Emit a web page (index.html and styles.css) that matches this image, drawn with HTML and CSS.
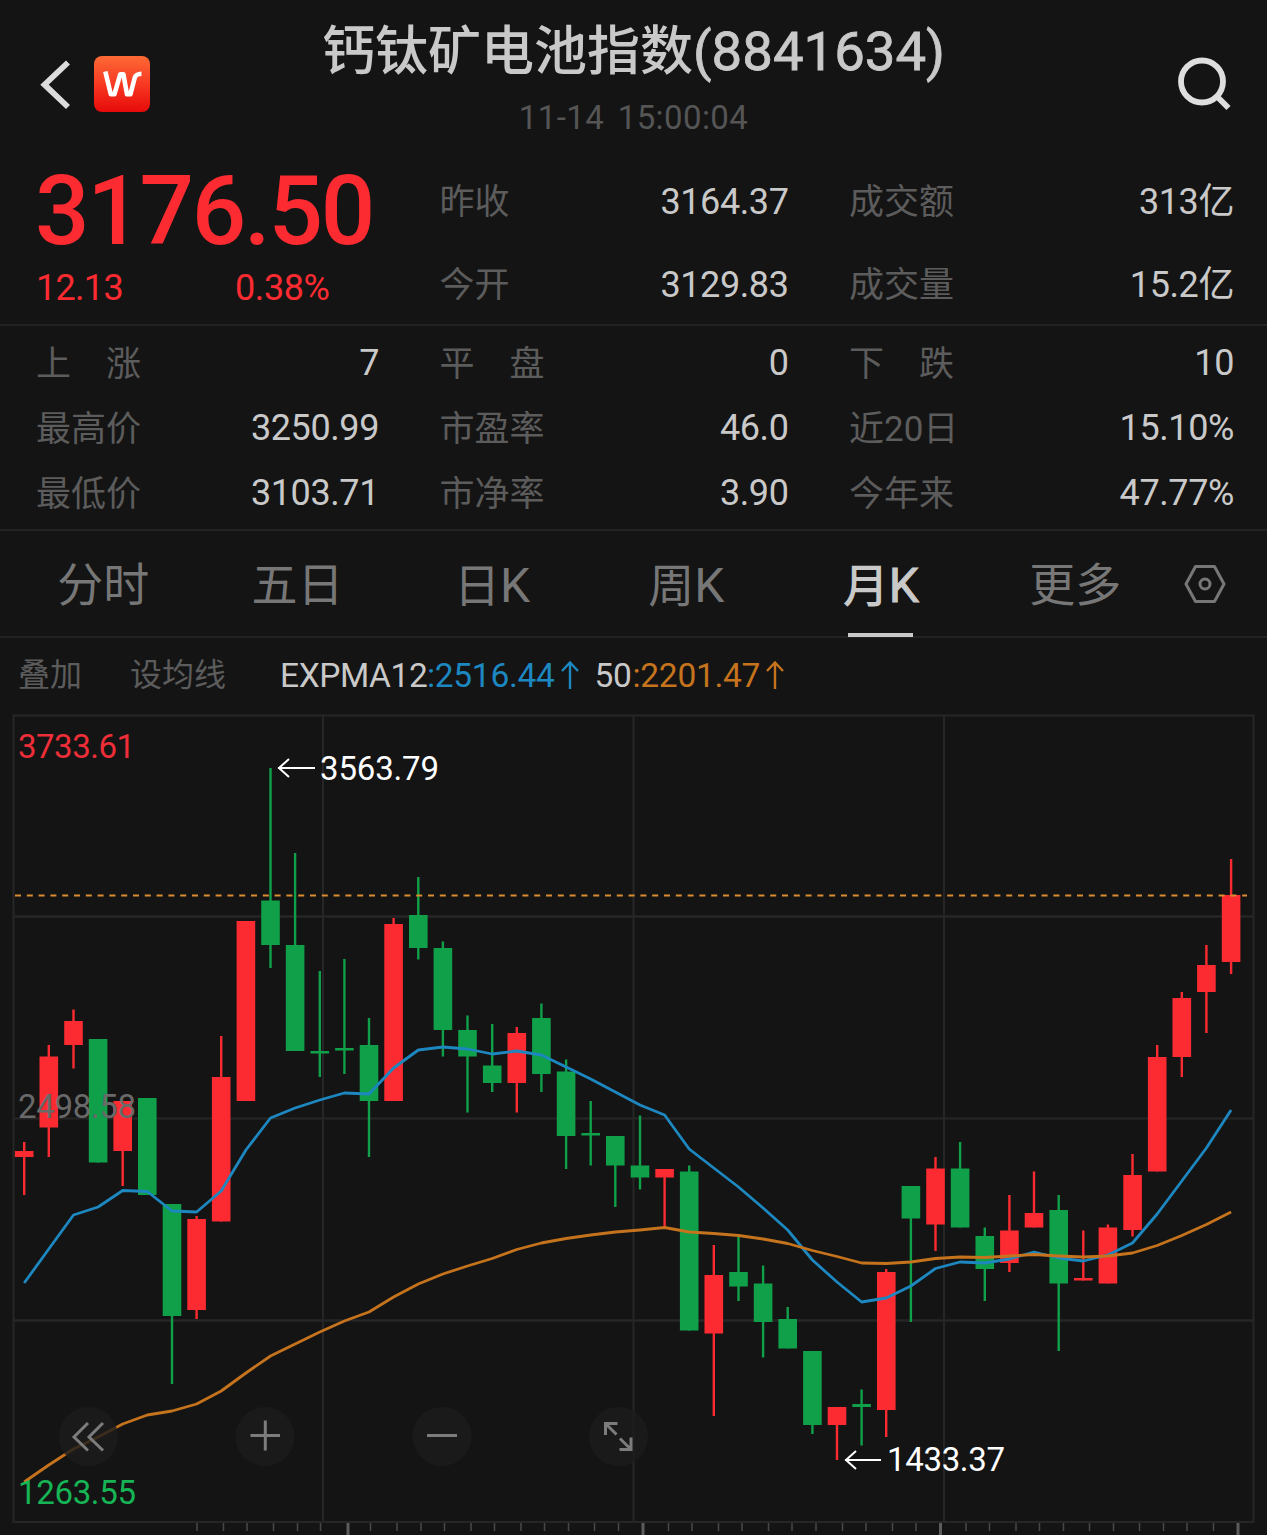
FILE: index.html
```html
<!DOCTYPE html>
<html lang="zh-CN">
<head>
<meta charset="utf-8">
<title>钙钛矿电池指数(8841634)</title>
<link rel="stylesheet" href="styles.css">
</head>
<body>
<header class="header">
  <div class="nav">
    <svg class="back" width="32" height="52" viewBox="0 0 32 52"><path d="M29 4.5 5.5 26.7 29 49" fill="none" stroke="#dcdcdc" stroke-width="5.8"/></svg>
    <svg class="logo" width="56" height="56" viewBox="0 0 56 56">
      <defs><linearGradient id="logo-fill" x1="0" y1="0" x2="0" y2="1"><stop offset="0" stop-color="#fd6a35"/><stop offset=".55" stop-color="#f63420"/><stop offset="1" stop-color="#e60a0a"/></linearGradient></defs>
      <rect width="56" height="56" rx="8" fill="url(#logo-fill)"/>
      <path d="M11.3 15.5 16.8 38.3H20.4L26.3 18.2H29.4L33 38.3H36.4L40.8 21.5Q42 17.8 47.5 17.7" fill="none" stroke="#fff" stroke-width="4.6" stroke-linejoin="round"/>
    </svg>
  </div>
  <div class="heading">
    <h1 class="title">钙钛矿电池指数<span class="code">(8841634)</span></h1>
    <div class="time">11-14 15:00:04</div>
  </div>
  <svg class="search" width="58" height="58" viewBox="0 0 58 58"><circle cx="27" cy="26.5" r="21" fill="none" stroke="#dedede" stroke-width="5.8"/><path d="M42 41.5 53.5 53" stroke="#dedede" stroke-width="5.8"/></svg>
</header>

<section class="quote">
  <div class="last">
    <div class="price">3176.50</div>
    <div class="change"><span class="diff">12.13</span><span class="pct">0.38%</span></div>
  </div>
  <dl class="pairs">
    <div class="pair"><dt>昨收</dt><dd>3164.37</dd></div>
    <div class="pair"><dt>今开</dt><dd>3129.83</dd></div>
  </dl>
  <dl class="pairs">
    <div class="pair"><dt>成交额</dt><dd>313亿</dd></div>
    <div class="pair"><dt>成交量</dt><dd>15.2亿</dd></div>
  </dl>
</section>

<section class="stats">
  <div class="pair"><span class="label split"><i>上</i><i>涨</i></span><span class="value">7</span></div>
  <div class="pair"><span class="label split"><i>平</i><i>盘</i></span><span class="value">0</span></div>
  <div class="pair"><span class="label split"><i>下</i><i>跌</i></span><span class="value">10</span></div>
  <div class="pair"><span class="label">最高价</span><span class="value">3250.99</span></div>
  <div class="pair"><span class="label">市盈率</span><span class="value">46.0</span></div>
  <div class="pair"><span class="label">近20日</span><span class="value">15.10%</span></div>
  <div class="pair"><span class="label">最低价</span><span class="value">3103.71</span></div>
  <div class="pair"><span class="label">市净率</span><span class="value">3.90</span></div>
  <div class="pair"><span class="label">今年来</span><span class="value">47.77%</span></div>
</section>

<nav class="tabs">
  <span class="tab">分时</span>
  <span class="tab">五日</span>
  <span class="tab"><span>日<span class="latin">K</span></span></span>
  <span class="tab"><span>周<span class="latin">K</span></span></span>
  <span class="tab active"><span>月<span class="latin">K</span></span></span>
  <span class="tab">更多</span>
  <svg class="settings" width="44" height="44" viewBox="0 0 44 44" fill="none" stroke="#777" stroke-width="3"><path d="M12.5 4.5H31.5L41 22 31.5 39.5H12.5L3 22Z" stroke-linejoin="round"/><circle cx="22" cy="22" r="5"/></svg>
</nav>

<div class="indicators">
  <span class="tool overlay">叠加</span>
  <span class="tool averages">设均线</span>
  <span class="expma">EXPMA12</span>
  <span class="fast">:2516.44</span>
  <svg class="up fast" width="20" height="30" viewBox="0 0 20 30" fill="none" stroke="currentColor" stroke-width="2.4"><path d="M10 29V3M2 11 10 2.5 18 11"/></svg>
  <span class="period">50</span>
  <span class="slow">:2201.47</span>
  <svg class="up slow" width="20" height="30" viewBox="0 0 20 30" fill="none" stroke="currentColor" stroke-width="2.4"><path d="M10 29V3M2 11 10 2.5 18 11"/></svg>
</div>

<svg class="chart" width="1267" height="823" viewBox="0 712 1267 823">
  <g class="grid">
    <path d="M13.5 715.5H1253.5V1522H13.5Z"/>
    <path d="M13 1118.5H1254M323 715V1522M633.5 715V1522M944 715V1522"/>
    <path class="strong" d="M13 916.5H1254M13 1320.5H1254"/>
  </g>
  <path id="ticks" class="ticks"/>
  <path id="major" class="major"/>
  <g id="candles"></g>
  <path class="last-line" d="M15 895.5H1247"/>
  <path id="fast" class="line fast"/>
  <path id="slow" class="line slow"/>
  <g class="axis">
    <text class="high" x="18" y="758" textLength="117">3733.61</text>
    <text class="mid" x="18" y="1117.5" textLength="118">2498.58</text>
    <text class="low" x="18" y="1503.5" textLength="118">1263.55</text>
  </g>
  <g class="marks">
    <path d="M278 768H315M289 759 279 768 289 777M845 1460H881M856 1451 846 1460 856 1469"/>
    <text x="320" y="780" textLength="119">3563.79</text>
    <text x="887" y="1470.5" textLength="118">1433.37</text>
  </g>
  <g class="controls">
    <circle cx="88.5" cy="1436.5" r="29.5"/><circle cx="265" cy="1436.5" r="29.5"/><circle cx="442" cy="1436.5" r="29.5"/><circle cx="618.5" cy="1436.5" r="29.5"/>
    <path d="M88 1423 74 1437 88 1450.5M103 1423 89 1437 103 1450.5M250.5 1435.5H280M265.3 1420.5V1450.5M427 1435.5H457"/>
    <path d="M605.5 1435V1423.5H617.5M606 1424 616.5 1434.5M619.5 1449.5H631V1437.5M630.5 1449 620 1438.5"/>
  </g>
</svg>
<script src="chart.js"></script>
</body>
</html>
```

FILE: styles.css
```css
* { box-sizing: border-box; }
body {
  margin: 0;
  width: 1267px;
  height: 1535px;
  overflow: hidden;
  background: #141414;
  color: #c9c9c9;
  font-family: Roboto, "Noto Sans CJK SC", sans-serif;
}
dl, dd, h1 { margin: 0; }

.header {
  display: grid;
  grid-template-columns: 260px 1fr 260px;
  height: 160px;
}
.nav { display: flex; align-items: flex-start; padding-left: 39px; }
.back { margin-top: 58px; }
.logo { margin: 56px 0 0 23px; }
.heading { text-align: center; white-space: nowrap; }
.title {
  margin-top: 16px;
  font-size: 53px;
  font-weight: 500;
  line-height: 70px;
}
.code { font-size: 54.5px; font-weight: 400; -webkit-text-stroke: .8px currentColor; }
.time {
  margin-top: 11px;
  color: #555;
  font-size: 33px;
  line-height: 40px;
  letter-spacing: .4px;
  word-spacing: 5px;
}
.search { justify-self: end; margin: 55px 34px 0 0; }

.quote, .stats {
  display: grid;
  grid-template-columns: 342px 349px 385px;
  column-gap: 60.5px;
  padding: 0 0 0 37px;
  border-bottom: 2px solid #222;
}
.quote { height: 166px; }
.price {
  height: 100px;
  margin-left: -2px;
  color: #fb2b31;
  font-size: 96px;
  font-weight: 500;
  line-height: 102px;
  letter-spacing: -2.3px;
}
.change { display: flex; color: #fb2b31; font-size: 36px; line-height: 56px; }
.diff { width: 199px; letter-spacing: -.7px; margin-left: -1px; }
.pct { letter-spacing: -.4px; }
.pairs { padding-top: 1px; }
.pair {
  display: flex;
  justify-content: space-between;
  font-size: 36px;
}
.pairs .pair { height: 83px; line-height: 82px; }
.pairs dt, .label { color: #5c5c5c; font-size: 35px; padding-top: 1px; }
.pairs dd, .value { letter-spacing: -.4px; }
.stats { height: 205px; padding-top: 5px; grid-auto-rows: 65px; }
.stats .pair { line-height: 65px; }
.stats .pair:nth-child(3n + 1) .label { margin-left: -1px; }
.split { display: flex; gap: 35px; }
.split i { font-style: normal; }

.tabs {
  display: flex;
  align-items: stretch;
  height: 107px;
  padding-left: 6px;
  border-bottom: 2px solid #222;
  color: #777;
  font-size: 46px;
  line-height: 109px;
}
.tab {
  display: flex;
  flex-direction: column;
  align-items: center;
  width: 194.4px;
  height: 105px;
}
.latin { font-size: 48px; }
.active { color: #c9c9c9; font-weight: 500; }
.active .latin { font-weight: 400; -webkit-text-stroke: 1px currentColor; }
.active::after {
  content: "";
  flex: none;
  width: 65px;
  height: 4px;
  margin-top: -8px;
  background: #c9c9c9;
}
.settings { margin: 31px 0 0 11px; }

.indicators {
  display: flex;
  height: 74px;
  padding-left: 18px;
  font-size: 33.5px;
  line-height: 75px;
  white-space: nowrap;
}
.tool { color: #5c5c5c; font-size: 32px; }
.overlay { width: 112px; }
.averages { width: 150px; }
.expma { width: 147px; letter-spacing: -.4px; }
.fast, .slow { letter-spacing: -.3px; }
.fast { color: #1d87c0; }
.slow { color: #c5731d; }
.up { margin: 22px 15px 0 5px; }
.period { width: 38px; letter-spacing: -.4px; }
.slow + .up { margin-left: 5px; }

.chart { display: block; }
.grid path { fill: none; stroke: #262626; stroke-width: 2; }
.grid .strong { stroke-width: 2.6; }
.ticks { stroke: #484848; stroke-width: 1.5; }
.major { stroke: #5c5c5c; stroke-width: 3; }
.up-candle { fill: #fb2b31; }
.down-candle { fill: #0fa049; }
.last-line { stroke: #d98d30; stroke-width: 2; stroke-dasharray: 6 5.8; }
.line { fill: none; stroke-width: 2.8; stroke-linejoin: round; }
.line.fast { stroke: #1d87c0; }
.line.slow { stroke: #c5731d; }
.axis text, .marks text { font-size: 33px; }
.high { fill: #ee2e38; }
.mid { fill: #696969; }
.low { fill: #16b455; }
.marks text { fill: #fff; }
.marks path { fill: none; stroke: #fff; stroke-width: 2; }
.controls circle { fill: #1c1c1c; fill-opacity: .82; }
.controls path { fill: none; stroke: #7c7c7c; stroke-width: 3; }
```

FILE: chart.js
```js
// Each candle: direction, wick top, body top, body bottom, wick bottom.
const candles = [
  ["u",1142,1151,1157,1195],["u",1045,1056.5,1127.5,1157],["u",1009.5,1021,1045,1068.5],["d",1039,1039,1162.5,1162.5],
  ["u",1101,1101,1151,1186],["d",1098,1098,1195,1195],["d",1204,1204,1316,1384],["u",1216,1219,1310,1319],
  ["u",1036,1077,1221.5,1221.5],["u",921,921,1101,1101],["d",768,900.5,945,968],["d",853,945,1051,1051],
  ["d",971,1051,1053.5,1077],["d",959,1048,1050.5,1074],["d",1018,1045,1101,1157],["u",918,924,1101,1101],
  ["d",877,915,948,959.5],["d",941.5,948,1030,1056.5],["d",1015.5,1030,1056.5,1112.5],["d",1024,1065.5,1083,1092],
  ["u",1027,1033,1083,1112.5],["d",1003.5,1018,1074,1092],["d",1059.5,1071.5,1136,1169],["d",1101,1133,1135.5,1165.5],
  ["d",1136,1136,1165.5,1207],["d",1115.5,1165.5,1177.5,1189.5],["u",1169,1169,1177.5,1228],["d",1165.5,1171.5,1330.5,1330.5],
  ["u",1245,1275,1333.5,1416],["d",1234,1272,1286.5,1301],["d",1265.5,1283.5,1322,1357.5],["d",1307,1319,1348.5,1348.5],
  ["d",1351,1351,1425,1434],["u",1407,1407,1425,1460],["d",1389.5,1404,1407,1445.5],["u",1269,1272,1410,1437],
  ["d",1186,1186,1218.5,1322],["u",1157,1168.5,1224.5,1251],["d",1142,1168.5,1227.5,1227.5],["d",1227.5,1236,1269,1301],
  ["u",1195,1230.5,1263,1272],["u",1171.5,1213,1227.5,1227.5],["d",1195,1210,1283.5,1351],["u",1230.5,1278,1280.5,1280.5],
  ["u",1224.5,1227.5,1283.5,1283.5],["u",1154,1175,1230,1236.5],["u",1045,1057,1171.5,1171.5],["u",992,998,1057,1077],
  ["u",945,965,992,1033],["u",859,895,962,974]
];
const fast = [1283,1249,1215,1207,1190.5,1191.5,1211,1212,1191,1150,1118,1108,1100,1093,1094,1068,1050,1047,1049,1054,1051,1055,1067,1079,1092,1105,1115,1149,1168,1187,1208,1230,1260,1282,1302,1298,1286,1268.5,1262,1263,1259,1252,1258,1261,1255,1243,1214,1181,1148,1110];
const slow = [1482,1465,1449,1437,1424,1415,1411,1404,1391,1373,1356,1344,1332,1321,1312,1297,1284,1274,1266,1258.5,1249.5,1243,1238.5,1235,1232,1230,1227.5,1232,1233.5,1235.5,1239,1243.5,1250.5,1256.5,1263,1263.5,1262,1258.5,1257,1257.5,1256,1254.5,1256,1257,1256,1253,1245.5,1235.5,1224.5,1212];
const minor = [197,223.5,247,273.5,297.5,320.5,370.5,397,421,444.5,471,494.5,521,544.5,568.5,594.5,618.5,668.5,692,718.5,742,768.5,792,816,842.5,866,892.5,916,966,989.5,1016,1039.5,1063.5,1089.5,1113.5,1139.5,1163.5,1187,1213.5];
const major = [348,643,940.5,1238];

const x = i => 24.2 + i * 24.63;
const polyline = ys => "M" + ys.map((y, i) => x(i).toFixed(1) + " " + y).join("L");
const set = (id, d) => document.getElementById(id).setAttribute("d", d);

document.getElementById("candles").innerHTML = candles.map(([dir, high, top, bottom, low], i) =>
  `<g class="${dir === "u" ? "up" : "down"}-candle"><rect x="${(x(i) - 1.2).toFixed(1)}" y="${high}" width="2.4" height="${low - high}"/><rect x="${(x(i) - 9.3).toFixed(1)}" y="${top}" width="18.6" height="${bottom - top}"/></g>`
).join("");
set("fast", polyline(fast));
set("slow", polyline(slow));
set("ticks", minor.map(t => `M${t} 1523V1531`).join(""));
set("major", major.map(t => `M${t} 1523V1535`).join(""));
```
